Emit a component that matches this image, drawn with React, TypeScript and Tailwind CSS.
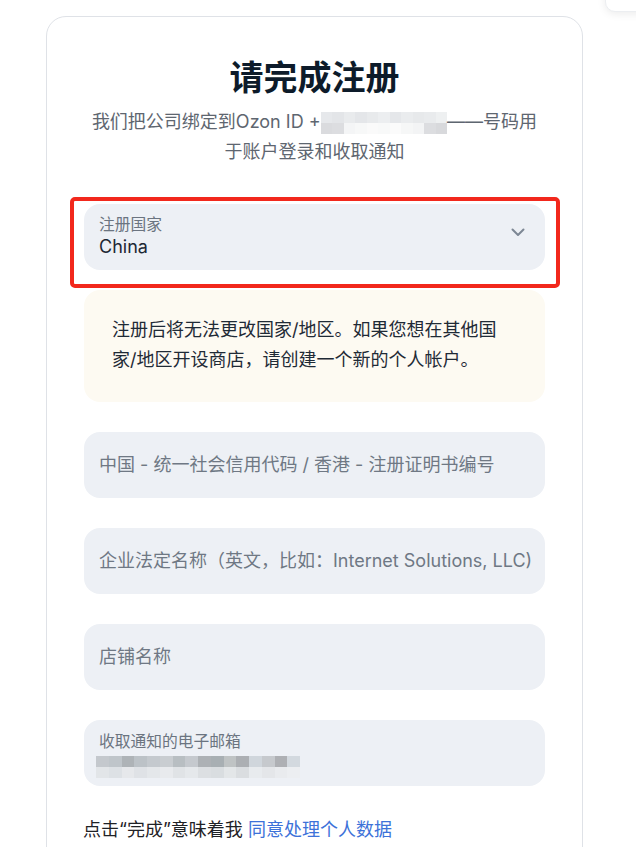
import type { ReactNode } from "react";

const FONT = 'Inter, "Noto Sans CJK SC", sans-serif';

const PHONE_TOP = ["#e6e8eb", "#e3e5e8", "#e9ebed", "#e4e6e9", "#e8eaec", "#eceef0", "#e5e7ea", "#eaecee", "#e7e9eb", "#e9ebed", "#eef0f1"];
const PHONE_BOTTOM = ["#dadbde", "#dcdde0", "#f4f5f6", "#f7f8f8", "#fafafa", "#f8f9f9", "#fbfbfb", "#f6f7f7", "#f3f4f5", "#dcdde0", "#d8d9dc"];

const EMAIL_TOP = ["#c4c8cd", "#bfc5ca", "#aeb3b7", "#bcc2c7", "#c4c9ce", "#c9cdd1", "#b8bec2", "#c5c9ce", "#adb1b5", "#a8afb3", "#bfc3c4", "#acafb3", "#d0d6dc", "#c6c9cd", "#aeb0b4", "#d3d9df"];
const EMAIL_BOTTOM = ["#e2e5e8", "#dde1e5", "#e6e8eb", "#dfe2e6", "#e4e7ea", "#e8eaed", "#e0e3e6", "#e5e8eb", "#dcdfe2", "#d9dde0", "#e3e6e8", "#dadde0", "#e8ebee", "#e4e6e9", "#e9ebee", "#eceef1"];

function Pixels({ top, bottom, cell, rowH }: { top: string[]; bottom: string[]; cell: number; rowH: number }) {
  return (
    <span className="inline-flex flex-col align-middle">
      {[top, bottom].map((row, r) => (
        <span key={r} className="flex">
          {row.map((c, i) => (
            <span key={i} style={{ background: c, width: cell, height: rowH }} />
          ))}
        </span>
      ))}
    </span>
  );
}

function Field({ children, className = "" }: { children: ReactNode; className?: string }) {
  return (
    <div className={`h-[66px] rounded-[16px] bg-[#edf0f5] pl-[15px] pr-[14px] flex flex-col justify-center ${className}`}>
      {children}
    </div>
  );
}

export default function App() {
  return (
    <div className="relative min-h-screen overflow-hidden bg-white" style={{ fontFamily: FONT }}>
      {/* popup peeking at the top right */}
      <div className="absolute left-[605px] top-[-22px] w-[60px] h-[34px] rounded-[10px] bg-white border border-[#eceef1] shadow-[0_2px_8px_rgba(0,0,0,0.08)]" />

      <div className="ml-[46px] mt-[16px] w-[537px] min-h-[900px] rounded-[20px] border border-[#dfe2e7] px-[37px] pt-[41px]">
        <h1 className="text-center text-[34px] leading-[40px] font-bold text-[#0d1b2a]">请完成注册</h1>
        <p className="mt-[9px] mx-auto w-[452px] text-center text-[18px] leading-[30px] text-[#5e6670]">
          我们把公司绑定到Ozon ID +
          <Pixels top={PHONE_TOP} bottom={PHONE_BOTTOM} cell={11.5} rowH={11} />
          ——号码用于账户登录和收取通知
        </p>

        <div className="relative mt-[37px]">
          <Field className="!justify-start pt-[11px]">
            <div className="flex items-center">
              <div className="flex-1">
                <div className="text-[15.75px] leading-[20px] text-[#6b7480]">注册国家</div>
                <div className="text-[18px] leading-[24px] text-[#1c2733]">China</div>
              </div>
              <svg width="14" height="9" viewBox="0 0 14 9" className="mr-[6px] mt-[-9px]" fill="none">
                <path d="M1.5 1.5 7 7l5.5-5.5" stroke="#7d8794" strokeWidth="2" strokeLinecap="round" strokeLinejoin="round" />
              </svg>
            </div>
          </Field>
          <div className="absolute -left-[14px] -right-[15px] -top-[7px] -bottom-[18px] rounded-[5px] border-4 border-[#f2281c]" />
        </div>

        <div className="mt-[20px] h-[112px] rounded-[16px] bg-[#fdfaf2] pl-[28px] pr-[40px] pt-[25px] text-[18px] leading-[30px] text-[#1f2a36]">
          注册后将无法更改国家/地区。如果您想在其他国家/地区开设商店，请创建一个新的个人帐户。
        </div>

        <Field className="mt-[30px]">
          <span className="text-[18px] leading-[24px] text-[#6f7884] whitespace-nowrap">中国 - 统一社会信用代码 / 香港 - 注册证明书编号</span>
        </Field>
        <Field className="mt-[30px]">
          <span className="text-[18px] leading-[24px] text-[#6f7884] whitespace-nowrap">企业法定名称（英文，比如：Internet Solutions, LLC)</span>
        </Field>
        <Field className="mt-[30px]">
          <span className="text-[18px] leading-[24px] text-[#6f7884]">店铺名称</span>
        </Field>
        <Field className="mt-[30px] !justify-start pt-[12px]">
          <div className="text-[15.75px] leading-[20px] text-[#6b7480]">收取通知的电子邮箱</div>
          <div className="mt-[1px] ml-[-3px]">
            <Pixels top={EMAIL_TOP} bottom={EMAIL_BOTTOM} cell={12.75} rowH={11} />
          </div>
        </Field>

        <p className="mt-[30px] ml-[-1px] text-[18px] leading-[28px] text-[#1f2226]">
          点击“完成”意味着我 <span className="text-[#3d72d9]">同意处理个人数据</span>
        </p>
      </div>
    </div>
  );
}
